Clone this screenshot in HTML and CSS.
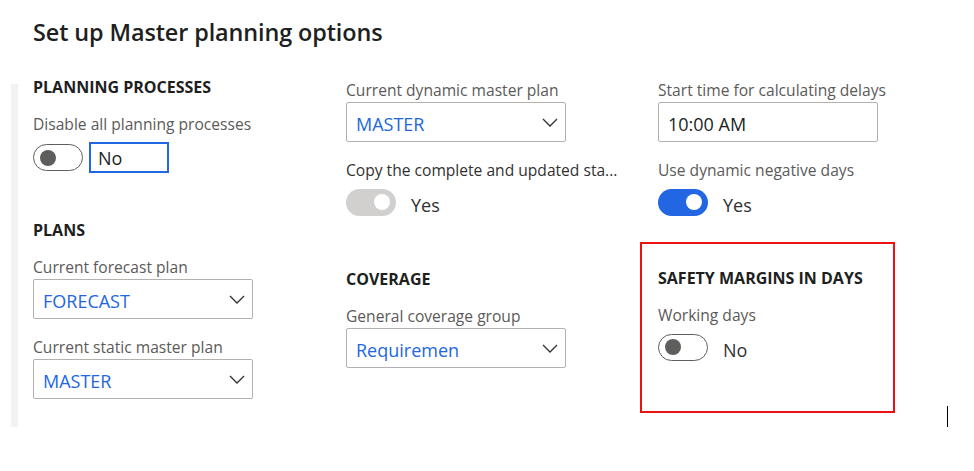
FILE: index.html
```html
<!DOCTYPE html>
<html lang="en">
<head>
<meta charset="utf-8">
<title>Set up Master planning options</title>
<link rel="stylesheet" href="styles.css">
</head>
<body>
<h1 class="title">Set up Master planning options</h1>
<div class="main">
  <div class="rail"></div>
  <div class="columns">
    <div class="col">
      <div class="section-head">PLANNING PROCESSES</div>
      <div class="label first-after-head">Disable all planning processes</div>
      <div class="toggle-row tight">
        <span class="toggle off"><span class="knob"></span></span>
        <span class="value-box">No</span>
      </div>
      <div class="section-head plans">PLANS</div>
      <div class="label first-after-head">Current forecast plan</div>
      <div class="select"><span class="select-value">FORECAST</span><svg class="chev" width="16" height="9" viewBox="0 0 16 9"><polyline points="1,1 8,8 15,1" fill="none" stroke="#323130" stroke-width="1.3"/></svg></div>
      <div class="label next">Current static master plan</div>
      <div class="select"><span class="select-value">MASTER</span><svg class="chev" width="16" height="9" viewBox="0 0 16 9"><polyline points="1,1 8,8 15,1" fill="none" stroke="#323130" stroke-width="1.3"/></svg></div>
    </div>
    <div class="col">
      <div class="label top">Current dynamic master plan</div>
      <div class="select"><span class="select-value">MASTER</span><svg class="chev" width="16" height="9" viewBox="0 0 16 9"><polyline points="1,1 8,8 15,1" fill="none" stroke="#323130" stroke-width="1.3"/></svg></div>
      <div class="label next dark">Copy the complete and updated sta...</div>
      <div class="toggle-row">
        <span class="toggle disabled"><span class="knob"></span></span>
        <span class="toggle-text">Yes</span>
      </div>
      <div class="section-head lower">COVERAGE</div>
      <div class="label first-after-head">General coverage group</div>
      <div class="select"><span class="select-value">Requiremen</span><svg class="chev" width="16" height="9" viewBox="0 0 16 9"><polyline points="1,1 8,8 15,1" fill="none" stroke="#323130" stroke-width="1.3"/></svg></div>
    </div>
    <div class="col">
      <div class="label top">Start time for calculating delays</div>
      <div class="select input"><span class="input-value">10:00 AM</span></div>
      <div class="label next">Use dynamic negative days</div>
      <div class="toggle-row">
        <span class="toggle on"><span class="knob"></span></span>
        <span class="toggle-text">Yes</span>
      </div>
      <div class="highlight">
        <div class="section-head">SAFETY MARGINS IN DAYS</div>
        <div class="label first-after-head">Working days</div>
        <div class="toggle-row">
          <span class="toggle off"><span class="knob"></span></span>
          <span class="toggle-text">No</span>
        </div>
      </div>
    </div>
  </div>
</div>
<div class="cursor"></div>
</body>
</html>
```

FILE: styles.css
```css
* { box-sizing: border-box; }
html, body { margin: 0; padding: 0; background: #ffffff; }
body {
  font-family: "Open Sans", "Noto Sans", "Liberation Sans", sans-serif;
  color: #323130;
  width: 974px;
  height: 471px;
  overflow: hidden;
  position: relative;
}
.title {
  margin: 0;
  padding: 17px 0 0 33px;
  font-size: 23.4px;
  line-height: 30px;
  font-weight: 600;
  color: #201f1e;
  letter-spacing: -0.1px;
}
.main {
  display: flex;
  margin-top: 29px;
}
.rail {
  width: 7px;
  margin-left: 11px;
  margin-top: 8px;
  height: 343px;
  background: #f3f2f1;
  flex: none;
}
.columns {
  display: grid;
  grid-template-columns: 313px 312px 260px;
  margin-left: 15px;
}
.col { display: flex; flex-direction: column; align-items: flex-start; }
.section-head {
  font-size: 16px;
  line-height: 22px;
  font-weight: 700;
  color: #201f1e;
}
.section-head.plans { margin-top: 46px; }
.section-head.lower { margin-top: 52px; }
.label {
  font-size: 15.6px;
  line-height: 20px;
  color: #5c5a58;
  white-space: nowrap;
}
.label.dark { color: #323130; }
.label.top { margin-top: 4px; }
.label.first-after-head { margin-top: 16px; }
.label.next { margin-top: 18px; }
.label + .select { margin-top: 2px; }
.select {
  width: 220px;
  height: 40px;
  border: 1px solid #b3b0ad;
  border-radius: 2px;
  display: flex;
  align-items: center;
  justify-content: space-between;
  padding: 0 7px 0 9px;
}
.select-value {
  font-size: 18px;
  color: #2266e3;
  padding-top: 4px;
}
.input-value {
  font-size: 18px;
  color: #201f1e;
  padding-top: 3px;
}
.chev { display: block; }
.toggle-row {
  display: flex;
  align-items: center;
  margin-top: 8px;
  height: 28px;
}
.toggle-row.tight { height: 31px; }
.toggle {
  width: 50px;
  height: 27px;
  border-radius: 14px;
  display: flex;
  align-items: center;
  flex: none;
}
.knob {
  width: 16px;
  height: 16px;
  border-radius: 50%;
}
.toggle.off {
  border: 1.5px solid #605e5c;
  padding-left: 6px;
}
.toggle.off .knob { background: #605e5c; }
.toggle.on {
  background: #2266e3;
  justify-content: flex-end;
  padding-right: 6px;
}
.toggle.on .knob, .toggle.disabled .knob { background: #ffffff; }
.toggle.disabled {
  background: #d2d0ce;
  justify-content: flex-end;
  padding-right: 6px;
}
.toggle-text {
  margin-left: 15px;
  font-size: 18px;
  color: #323130;
  padding-top: 5px;
}
.value-box {
  margin-left: 6px;
  width: 80px;
  height: 31px;
  border: 2px solid #2266e3;
  font-size: 18px;
  color: #201f1e;
  padding-left: 7px;
  padding-top: 1px;
  display: flex;
  align-items: center;
}
.highlight {
  margin-top: 26px;
  margin-left: -18px;
  width: 255px;
  border: 2px solid #ee1111;
  padding: 23px 0 50px 16px;
}
.cursor {
  position: absolute;
  left: 947px;
  top: 406px;
  width: 1px;
  height: 21px;
  background: #000000;
}
```
